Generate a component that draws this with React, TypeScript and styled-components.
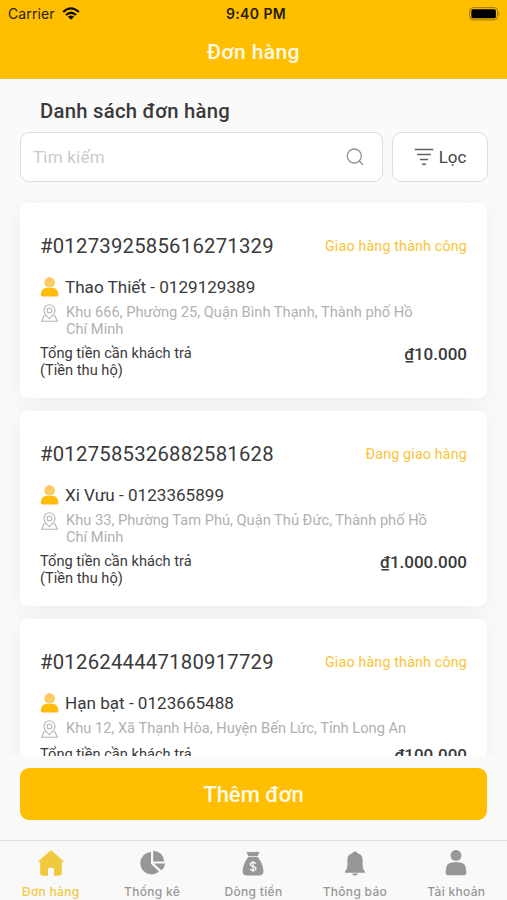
import React from 'react';
import styled, { createGlobalStyle } from 'styled-components';

const GlobalStyle = createGlobalStyle`
  * { box-sizing: border-box; }
  body { margin: 0; background: #fafafa; font-family: Roboto, "Noto Sans", sans-serif; color: #3a3a3a; }
  button { font: inherit; border: 0; padding: 0; cursor: pointer; }
`;

const Screen = styled.div`
  width: 507px;
  height: 900px;
  display: flex;
  flex-direction: column;
  overflow: hidden;
  background: #fafafa;
`;

const Header = styled.header`
  height: 79px;
  flex: none;
  background: #ffbf00;
  border-bottom: 1px solid #efbd2b;
`;

const StatusBar = styled.div`
  height: 27px;
  display: grid;
  grid-template-columns: 1fr auto 1fr;
  align-items: center;
  padding: 0 6px 0 8px;
  color: #251d04;
  font-family: Inter, sans-serif;
  font-size: 14px;
`;

const Carrier = styled.div`
  display: flex;
  align-items: center;
  gap: 7px;
  letter-spacing: 0.1px;
`;

const Clock = styled.div`
  font-weight: 600;
  letter-spacing: 0.4px;
  padding-left: 3px;
`;

const Battery = styled.svg`
  justify-self: end;
`;

const Title = styled.h1`
  margin: 0;
  height: 50px;
  display: flex;
  align-items: center;
  justify-content: center;
  font-size: 21px;
  letter-spacing: 0.4px;
  font-weight: 500;
  color: #fffbe8;
`;

const Heading = styled.h2`
  margin: 0;
  padding: 20px 40px 0;
  height: 53px;
  flex: none;
  font-size: 20.3px;
  line-height: 24px;
  font-weight: 500;
  letter-spacing: 0.25px;
`;

const Tools = styled.div`
  display: grid;
  grid-template-columns: 363px 96px;
  gap: 9px;
  height: 50px;
  flex: none;
  padding: 0 19px 0 20px;
`;

const SearchBox = styled.label`
  display: flex;
  align-items: center;
  border: 1px solid #dedede;
  border-radius: 9px;
  background: #fff;
  padding: 0 18px 0 12px;
`;

const SearchInput = styled.input`
  flex: 1;
  min-width: 0;
  border: 0;
  outline: 0;
  padding: 0;
  background: transparent;
  font: 17px Roboto, sans-serif;
  letter-spacing: 0.2px;
  &::placeholder { color: #cbcbcb; opacity: 1; }
`;

const FilterButton = styled.button`
  display: flex;
  align-items: center;
  justify-content: center;
  gap: 5px;
  border: 1px solid #dedede;
  border-radius: 10px;
  background: #fff;
  color: #444;
  font-size: 17px;
`;

const List = styled.main`
  flex: none;
  height: 574px;
  overflow: hidden;
  padding: 21px 20px 0;
  display: flex;
  flex-direction: column;
  gap: 13px;
`;

const Card = styled.article`
  flex: none;
  padding: 30px 20px 19px;
  border-radius: 8px;
  background: #fff;
  box-shadow: 0 3px 22px rgba(0, 0, 0, 0.05);
`;

const CardTop = styled.div`
  height: 26px;
  display: flex;
  align-items: center;
  justify-content: space-between;
`;

const OrderId = styled.span`
  font-size: 20.3px;
  letter-spacing: 0.24px;
`;

const Status = styled.span`
  font-size: 14.3px;
  color: #fbc336;
  letter-spacing: 0.15px;
`;

const Customer = styled.div`
  height: 24px;
  margin-top: 16px;
  display: flex;
  align-items: center;
  gap: 6px;
  font-size: 17.1px;
`;

const Address = styled.div`
  margin-top: 5px;
  display: flex;
  gap: 7px;
  color: #b1b1b1;
  font-size: 14.65px;
  line-height: 17px;
`;

const AddressText = styled.span`
  width: 365px;
`;

const Totals = styled.div`
  margin-top: 7px;
  height: 34px;
  display: flex;
  justify-content: space-between;
`;

const TotalLabel = styled.span`
  font-size: 14.65px;
  line-height: 17px;
`;

const Price = styled.span`
  font-size: 17px;
  line-height: 19px;
  font-weight: 500;
`;

const Footer = styled.div`
  height: 84px;
  flex: none;
  padding: 12px 20px 0;
  background: #fafafa;
`;

const AddButton = styled.button`
  width: 100%;
  height: 52px;
  border-radius: 9px;
  background: #ffbf00;
  color: #fffbe8;
  font-size: 22px;
  font-weight: 500;
`;

const TabBar = styled.nav`
  height: 60px;
  flex: none;
  border-top: 1px solid #e0e0e0;
  display: grid;
  grid-template-columns: repeat(5, 1fr);
  background: #f9f9f9;
`;

const Tab = styled.button<{ $active?: boolean }>`
  background: transparent;
  display: flex;
  flex-direction: column;
  align-items: center;
  padding-top: 8px;
  gap: 7px;
  color: ${(p) => (p.$active ? '#f0c93f' : '#979797')};
  font: 500 12px/16px Inter, sans-serif;
  letter-spacing: 0.3px;
  white-space: nowrap;
`;

const Wifi = () => (
  <svg width="18" height="13" viewBox="0 0 18 13" fill="none" stroke="#120d00" strokeWidth="2.3">
    <path d="M1.2 5Q9-2.2 16.8 5" />
    <path d="M4 8Q9 3.5 14 8" />
    <path d="M9 12.8 5.9 9.7Q9 7.3 12.1 9.7Z" fill="#120d00" stroke="none" />
  </svg>
);

const Person = () => (
  <svg width="19" height="20" viewBox="0 0 19 20">
    <circle cx="9.6" cy="5.4" r="5.3" fill="#fdcc64" />
    <path d="M.8 17.8Q.8 11.5 6.2 11H13Q18.4 11.5 18.4 17.8Q18.4 19.6 16.8 19.6H2.4Q.8 19.6.8 17.8Z" fill="#ffbc0b" />
  </svg>
);

const Pin = () => (
  <svg width="19" height="19" viewBox="0 0 19 19" fill="none" stroke="#b4b4b4" strokeWidth="1.1">
    <path d="M9.5 14.7C7.3 12.4 3.9 9.4 3.9 6.4a5.6 5.6 0 0 1 11.2 0c0 3-3.4 6-5.6 8.3Z" />
    <circle cx="9.5" cy="6.4" r="2.4" />
    <path d="M5.4 11.9H4L1.7 17.3H17.3L15 11.9H13.6" />
  </svg>
);

const Magnifier = () => (
  <svg width="18" height="18" viewBox="0 0 18 18" fill="none" stroke="#929292" strokeWidth="1.3" strokeLinecap="round">
    <circle cx="8.3" cy="8" r="7" />
    <path d="m13.3 13 3.4 3.6" />
  </svg>
);

const FilterIcon = () => (
  <svg width="20" height="18" viewBox="0 0 20 18" stroke="#5f5f5f" strokeWidth="1.6">
    <path d="M.7 1.5H19.3M3.2 6.5H16.8M5.8 11.5H14.2M8 16.3H12" />
  </svg>
);

const HomeIcon = () => (
  <svg width="28" height="28" viewBox="0 0 28 28" fill="currentColor">
    <path d="M13.2 1.8 1.2 12.3Q1 13.4 3.2 13V24Q3.2 26.8 6 26.8H11V20.8Q11 18.8 12.7 18.8H15.2Q17 18.8 17 20.8V26.8H22Q24.8 26.8 24.8 24V13Q27.2 13.4 26.8 12.3L14.8 1.8Q14 1.2 13.2 1.8Z" />
  </svg>
);

const PieIcon = () => (
  <svg width="28" height="28" viewBox="0 0 28 28" fill="currentColor">
    <path d="M13 3A11.2 11.2 0 1 0 21 22.5L13 14.8Z" />
    <path d="M15.2 1.8V12.4H26.2Q25.5 3 15.2 1.8Z" />
    <path d="M16 14.5H27Q26.6 18.9 23.2 21.3Z" />
  </svg>
);

const BagIcon = () => (
  <svg width="28" height="28" viewBox="0 0 28 28" fill="currentColor">
    <path d="M9.4 7.3 7.4 2.8Q9.5 3.8 10.6 2.5Q12.4 4 14 2.5Q15.6 4 17.4 2.5Q18.7 3.8 20.6 2.8L18.6 7.3Z" />
    <path d="M9.4 8.1H18.6C22 11.7 24.4 18 24.4 22.6Q24.4 26.4 20.8 26.4H7.2Q3.6 26.4 3.6 22.6C3.6 18 6 11.7 9.4 8.1Z" />
    <path d="M17 14.4Q14 12.4 11.8 14.2Q10.4 16.3 14 17.3Q18.2 18.4 16.3 20.8Q13.8 22.2 11 20.3M14 12V23" fill="none" stroke="#f9f9f9" strokeWidth="1.3" />
  </svg>
);

const BellIcon = () => (
  <svg width="28" height="28" viewBox="0 0 28 28" fill="currentColor">
    <path d="M11.4 4.2Q11.8 2.6 14 2.6T16.6 4.2C20.2 5 21.6 7.6 21.6 11V16.5Q21.6 20 23.9 22.3V23.8H4.1V22.3Q6.4 20 6.4 16.5V11C6.4 7.6 7.8 5 11.4 4.2Z" />
    <path d="M11 24.5H17Q16.6 26.6 14 26.6T11 24.5Z" />
  </svg>
);

const UserIcon = () => (
  <svg width="28" height="28" viewBox="0 0 28 28" fill="currentColor">
    <circle cx="14" cy="6.4" r="5.4" />
    <path d="M3.7 24V22Q3.7 13.5 11 13.2H17Q24.3 13.5 24.3 22V24Q24.3 26.2 22 26.2H6Q3.7 26.2 3.7 24Z" />
  </svg>
);

const orders = [
  { id: '#0127392585616271329', status: 'Giao hàng thành công', customer: 'Thao Thiết - 0129129389', address: 'Khu 666, Phường 25, Quận Bình Thạnh, Thành phố Hồ Chí Minh', price: '₫10.000' },
  { id: '#0127585326882581628', status: 'Đang giao hàng', customer: 'Xi Vưu - 0123365899', address: 'Khu 33, Phường Tam Phú, Quận Thủ Đức, Thành phố Hồ Chí Minh', price: '₫1.000.000' },
  { id: '#0126244447180917729', status: 'Giao hàng thành công', customer: 'Hạn bạt - 0123665488', address: 'Khu 12, Xã Thạnh Hòa, Huyện Bến Lức, Tỉnh Long An', price: '₫100.000' },
];

const tabs = [
  { label: 'Đơn hàng', Icon: HomeIcon },
  { label: 'Thống kê', Icon: PieIcon },
  { label: 'Dòng tiền', Icon: BagIcon },
  { label: 'Thông báo', Icon: BellIcon },
  { label: 'Tài khoản', Icon: UserIcon },
];

export default function App() {
  return (
    <Screen>
      <GlobalStyle />
      <Header>
        <StatusBar>
          <Carrier>Carrier <Wifi /></Carrier>
          <Clock>9:40 PM</Clock>
          <Battery width="32" height="14" viewBox="0 0 32 14">
            <rect x=".7" y=".7" width="27.8" height="12.2" rx="3.2" fill="none" stroke="#9b7708" />
            <rect x="2.3" y="2.3" width="24.6" height="9" rx="1.6" fill="#000" />
            <path d="M29.6 4.8Q31.5 6.8 29.6 8.8Z" fill="#8d6c08" />
          </Battery>
        </StatusBar>
        <Title>Đơn hàng</Title>
      </Header>
      <Heading>Danh sách đơn hàng</Heading>
      <Tools>
        <SearchBox>
          <SearchInput placeholder="Tìm kiếm" />
          <Magnifier />
        </SearchBox>
        <FilterButton><FilterIcon />Lọc</FilterButton>
      </Tools>
      <List>
        {orders.map((o) => (
          <Card key={o.id}>
            <CardTop>
              <OrderId>{o.id}</OrderId>
              <Status>{o.status}</Status>
            </CardTop>
            <Customer><Person />{o.customer}</Customer>
            <Address>
              <Pin />
              <AddressText>{o.address}</AddressText>
            </Address>
            <Totals>
              <TotalLabel>Tổng tiền cần khách trả<br />(Tiền thu hộ)</TotalLabel>
              <Price>{o.price}</Price>
            </Totals>
          </Card>
        ))}
      </List>
      <Footer><AddButton>Thêm đơn</AddButton></Footer>
      <TabBar>
        {tabs.map(({ label, Icon }, i) => (
          <Tab key={label} $active={i === 0}><Icon />{label}</Tab>
        ))}
      </TabBar>
    </Screen>
  );
}
